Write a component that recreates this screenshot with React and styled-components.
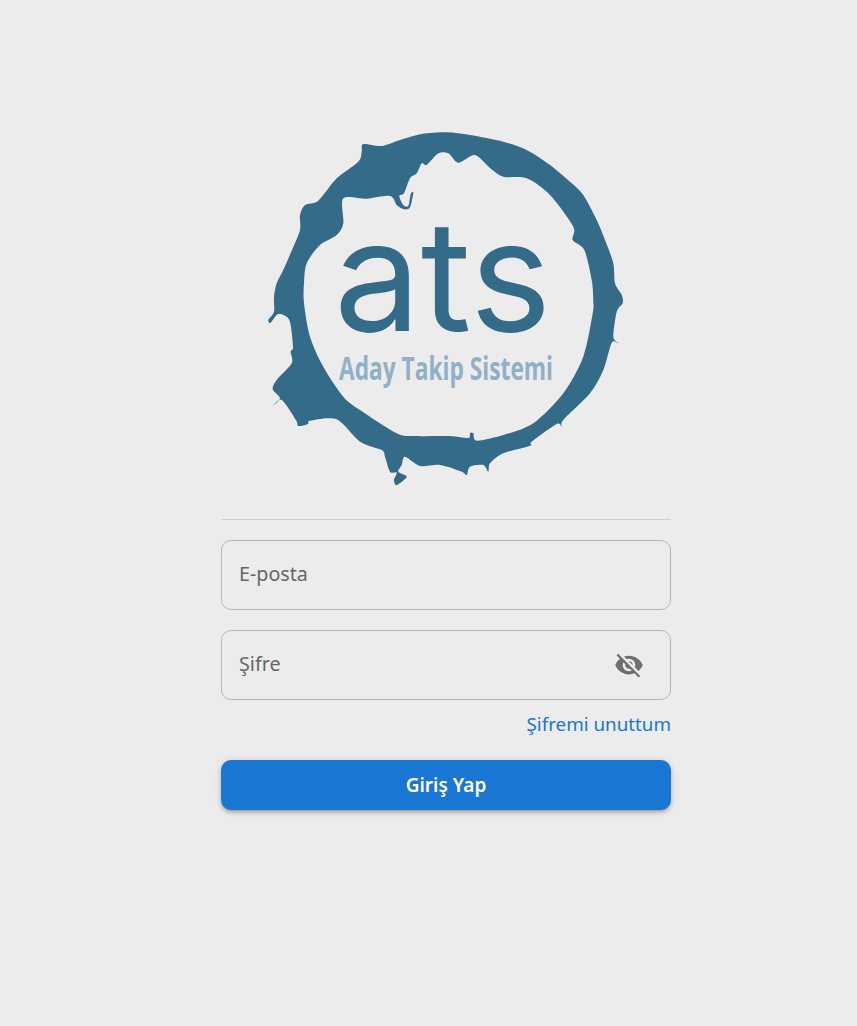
import styled, { createGlobalStyle } from "styled-components";
import { MdVisibilityOff } from "react-icons/md";

const FONT = `"Noto Sans", "Open Sans", sans-serif`

const GlobalStyle = createGlobalStyle`
html, body {
  margin: 0;
  background: #ececec;
  font-family: ${FONT};
}
* { box-sizing: border-box; }
`

const Page = styled.main`
min-height: 1026px;
padding: 131px 0 0 35px;
display: flex;
justify-content: center;
`
const Form = styled.form`
width: 450px;
display: flex;
flex-direction: column;
`
const LogoBox = styled.div`
display: flex;
justify-content: center;
`
const Divider = styled.hr`
width: 100%;
height: 1px;
margin: 32px 0 20px;
border: 0;
background: #cfcfcf;
`
const Field = styled.div`
position: relative;
height: 70px;
& + & { margin-top: 20px; }
`
const Input = styled.input`
width: 100%;
height: 100%;
padding: 0 17px 4px;
border: 1px solid #b6b6b6;
border-radius: 10px;
background: transparent;
font: 400 19.7px ${FONT};
outline: none;
&::placeholder { color: #666; opacity: 1; }
`
const EyeButton = styled.button`
position: absolute;
top: 50%;
right: 27px;
transform: translateY(-50%);
display: flex;
padding: 0;
border: 0;
background: none;
color: #6e6e6e;
`
const ForgotRow = styled.div`
display: flex;
justify-content: flex-end;
margin: 12px 0 24px;
`
const ForgotLink = styled.a`
color: #1976d2;
font-size: 18.8px;
line-height: 24px;
text-decoration: none;
`
const Submit = styled.button`
height: 50px;
padding-bottom: 2px;
border: 0;
border-radius: 10px;
background: #1976d2;
color: #fff;
font: 600 19px ${FONT};
box-shadow: 0 3px 3px -2px rgba(0,0,0,.2), 0 3px 4px rgba(0,0,0,.14), 0 1px 8px rgba(0,0,0,.12);
`

// outline of the paint ring, in page pixels
const OUTER = [[421.7,134],[446.7,132.3],[470,135],[503.3,141.7],[526.7,150],[550,165],[570,181.7],[583.3,195],[596.7,220],[605,240],[613.3,263.3],[615,283.3],[621.7,295],[622.7,303],[616.7,311.7],[613.3,336.7],[618.3,343.3],[611.7,342.7],[603.3,370],[590,393.3],[563.3,420],[561.7,426.7],[556.7,424],[531.7,441.7],[530,445.7],[503.3,453.3],[490,463.3],[488.3,471.7],[483.3,465],[470,466.7],[466.7,475],[461.7,471.7],[440,465],[420,466],[405,456.7],[401.7,465],[398.3,471.7],[406.7,476.7],[396.7,485],[394,480],[396.7,472.7],[390,471.7],[385,456.7],[381.7,450],[360,441.7],[336.7,419.3],[310,420.7],[308,424],[298.3,426],[296,420],[281.7,400],[272.7,406],[280,398.3],[272.7,389.3],[276.7,380],[291.7,363.3],[290.7,351.7],[293,346.7],[289.3,320],[278.3,314],[270.7,322.7],[268.3,320],[274,311.7],[274,296.7],[276.7,283.3],[283.3,270],[292,250],[300,230],[300,215],[305,205],[318.3,200.7],[336.7,178.3],[358.3,161.7],[361.7,151.7],[363.3,144],[381.7,146],[400,140]]
const INNER = [[343.3,198.3],[366.7,198.7],[390,196],[396.7,205],[404,209.3],[410,207.3],[413.3,192.7],[410.7,194],[408.3,206],[403.3,205],[399.3,196],[404,193.3],[410,178.3],[416.7,173.3],[421.7,163.3],[426.7,165],[438.3,153.3],[448.3,153.3],[458.3,162.7],[475,155],[490,168],[503.3,176.7],[526.7,178.3],[550,195],[573.3,226.7],[572.7,240],[584.3,250],[591.7,280],[593.3,301.7],[592.7,313.3],[583.3,356.7],[563.3,393.3],[533.3,423.3],[503.3,435],[476.7,440.7],[473.3,433.3],[470,433.3],[468.3,438],[450,436],[413.3,436],[396.7,433.3],[360,410],[343.3,396.7],[323.3,366.7],[310,336.7],[304,303.3],[304,283.3],[306.7,263.3],[320,245],[336.7,235],[343.3,223.3]]

// closed catmull-rom curve through the points, so the outline reads as wet paint
function toPath(points) {
    const n = points.length
    const at = i => points[(i + n) % n]
    const r = v => v.toFixed(1)
    let d = `M${points[0][0]} ${points[0][1]}`
    for (let i = 0; i < n; i++) {
        const [p0, p1, p2, p3] = [at(i - 1), at(i), at(i + 1), at(i + 2)]
        const c1 = [p1[0] + (p2[0] - p0[0]) / 7, p1[1] + (p2[1] - p0[1]) / 7]
        const c2 = [p2[0] - (p3[0] - p1[0]) / 7, p2[1] - (p3[1] - p1[1]) / 7]
        d += `C${r(c1[0])} ${r(c1[1])} ${r(c2[0])} ${r(c2[1])} ${p2[0]} ${p2[1]}`
    }
    return d + "Z"
}

function Logo() {
    return (
        <svg width="356" height="356" viewBox="268 131 356 356" role="img" aria-label="ATS">
            <path d={toPath(OUTER) + toPath(INNER)} fill="#346b88" fillRule="evenodd" />
            <text transform="translate(334 331) scale(1.01 1)" fontFamily="Inter" fontWeight="400" fontSize="153" fill="#346b88">ats</text>
            <text transform="translate(339 380) scale(0.71 1)" fontFamily="Open Sans" fontWeight="700" fontSize="32" fill="#8fb0c6">Aday Takip Sistemi</text>
        </svg>
    )
}

export default function App() {
    return (
        <Page>
            <GlobalStyle />
            <Form>
                <LogoBox><Logo /></LogoBox>
                <Divider />
                <Field>
                    <Input type="email" placeholder="E-posta" />
                </Field>
                <Field>
                    <Input type="password" placeholder="Şifre" />
                    <EyeButton type="button"><MdVisibilityOff size={30} /></EyeButton>
                </Field>
                <ForgotRow><ForgotLink href="#">Şifremi unuttum</ForgotLink></ForgotRow>
                <Submit type="button">Giriş Yap</Submit>
            </Form>
        </Page>
    )
}
